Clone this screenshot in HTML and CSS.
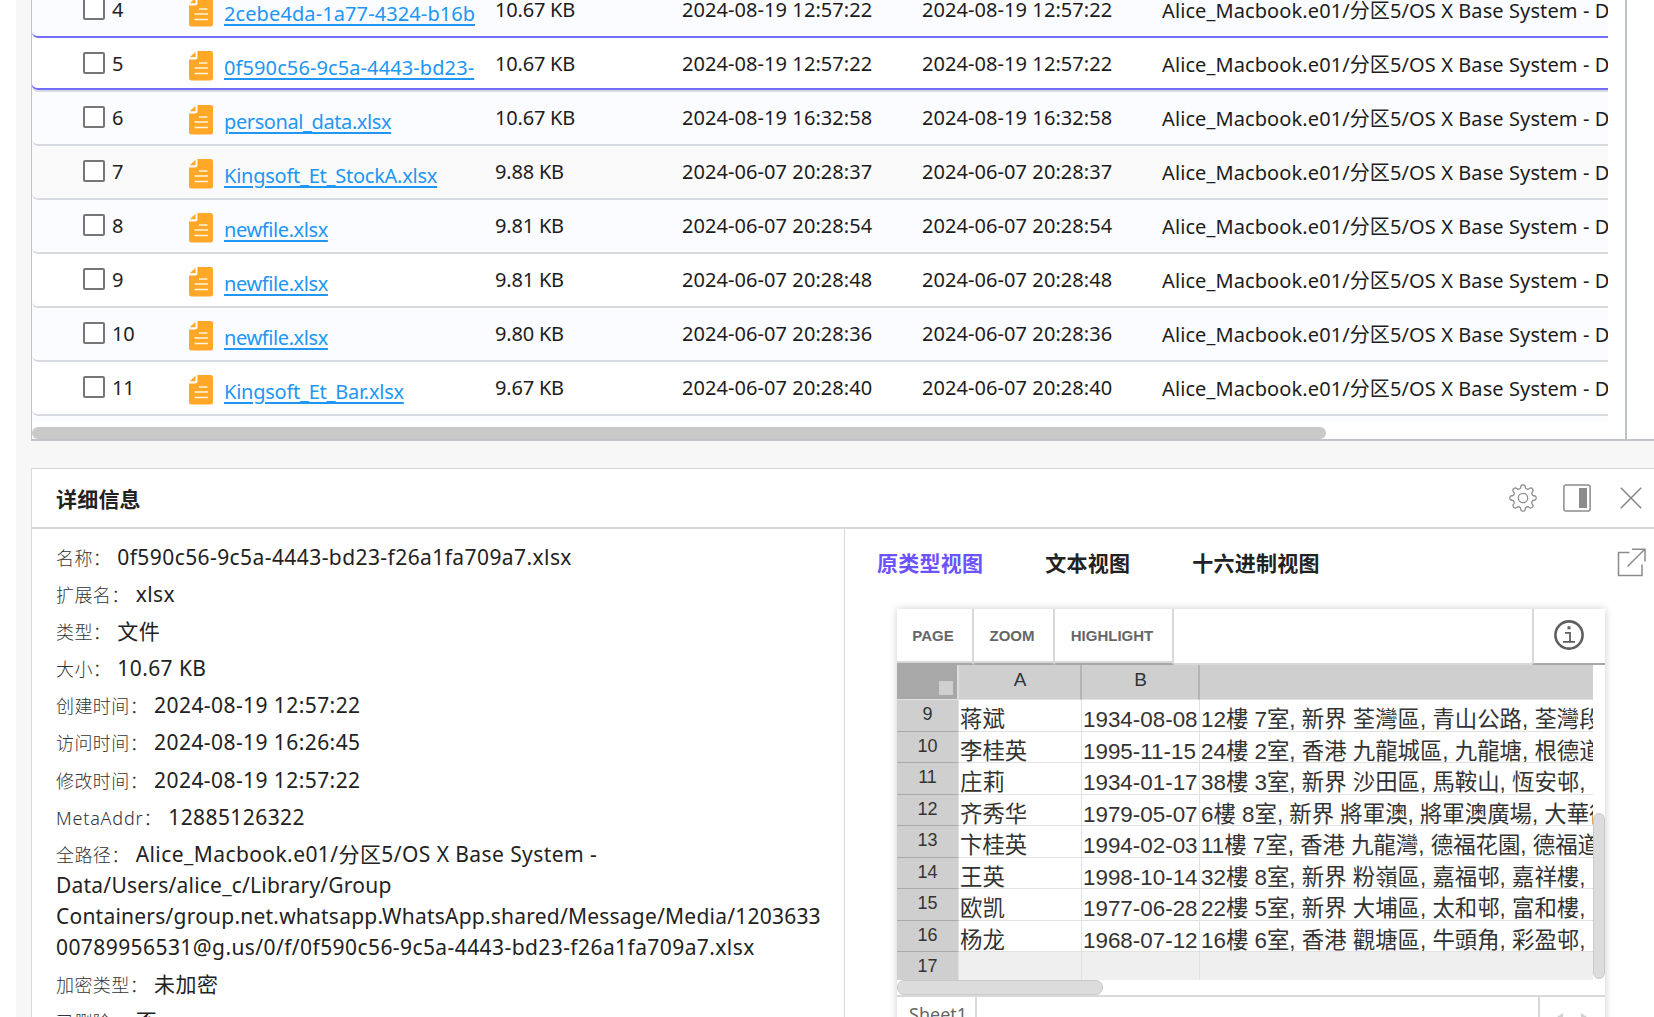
FILE: index.html
```html
<!DOCTYPE html>
<html lang="zh-CN">
<head>
    <meta charset="UTF-8">
    <meta name="viewport" content="width=device-width, initial-scale=1.0">
    <title>详细信息</title>
    <link rel="stylesheet" href="styles.css">
</head>
<body>

    <!-- Shared icons -->
    <svg class="icon-defs" width="0" height="0">
        <symbol id="file-icon" viewBox="0 0 24 30">
            <path fill="#ffa726" d="M9.5 0H21.5Q24 0 24 2.500V27Q24 29.500 21.500 29.500H2.500Q0 29.500 0 27V8.500H6Q8.500 8.500 8.500 6V0Z"/>
            <path fill="#ffa726" d="M6.500 .8V6.300H.8Z"/>
            <path stroke="#fff3dd" stroke-width="1.500" d="M10 12h8.500M5.500 17h13.500M5.500 22.500h13.500"/>
        </symbol>
    </svg>

    <main class="page">

        <!-- File list -->
        <section class="file-list">
            <div class="rows">
                <div class="row row-tint row-before">
                    <input type="checkbox"><span class="num">4</span>
                    <svg class="file-icon"><use href="#file-icon"/></svg>
                    <a href="#" class="name name-hash">2cebe4da-1a77-4324-b16b</a>
                    <span class="cell size">10.67 KB</span>
                    <span class="cell date">2024-08-19 12:57:22</span>
                    <span class="cell date">2024-08-19 12:57:22</span>
                    <span class="cell path">Alice_Macbook.e01/分区5/OS X Base System - D</span>
                </div>
                <div class="row row-selected">
                    <input type="checkbox"><span class="num">5</span>
                    <svg class="file-icon"><use href="#file-icon"/></svg>
                    <a href="#" class="name name-hash">0f590c56-9c5a-4443-bd23-</a>
                    <span class="cell size">10.67 KB</span>
                    <span class="cell date">2024-08-19 12:57:22</span>
                    <span class="cell date">2024-08-19 12:57:22</span>
                    <span class="cell path">Alice_Macbook.e01/分区5/OS X Base System - D</span>
                </div>
                <div class="row row-tint">
                    <input type="checkbox"><span class="num">6</span>
                    <svg class="file-icon"><use href="#file-icon"/></svg>
                    <a href="#" class="name name-short">personal_data.xlsx</a>
                    <span class="cell size">10.67 KB</span>
                    <span class="cell date">2024-08-19 16:32:58</span>
                    <span class="cell date">2024-08-19 16:32:58</span>
                    <span class="cell path">Alice_Macbook.e01/分区5/OS X Base System - D</span>
                </div>
                <div class="row row-hover">
                    <input type="checkbox"><span class="num">7</span>
                    <svg class="file-icon"><use href="#file-icon"/></svg>
                    <a href="#" class="name">Kingsoft_Et_StockA.xlsx</a>
                    <span class="cell size">9.88 KB</span>
                    <span class="cell date">2024-06-07 20:28:37</span>
                    <span class="cell date">2024-06-07 20:28:37</span>
                    <span class="cell path">Alice_Macbook.e01/分区5/OS X Base System - D</span>
                </div>
                <div class="row row-tint">
                    <input type="checkbox"><span class="num">8</span>
                    <svg class="file-icon"><use href="#file-icon"/></svg>
                    <a href="#" class="name name-short">newfile.xlsx</a>
                    <span class="cell size">9.81 KB</span>
                    <span class="cell date">2024-06-07 20:28:54</span>
                    <span class="cell date">2024-06-07 20:28:54</span>
                    <span class="cell path">Alice_Macbook.e01/分区5/OS X Base System - D</span>
                </div>
                <div class="row">
                    <input type="checkbox"><span class="num">9</span>
                    <svg class="file-icon"><use href="#file-icon"/></svg>
                    <a href="#" class="name name-short">newfile.xlsx</a>
                    <span class="cell size">9.81 KB</span>
                    <span class="cell date">2024-06-07 20:28:48</span>
                    <span class="cell date">2024-06-07 20:28:48</span>
                    <span class="cell path">Alice_Macbook.e01/分区5/OS X Base System - D</span>
                </div>
                <div class="row row-tint">
                    <input type="checkbox"><span class="num">10</span>
                    <svg class="file-icon"><use href="#file-icon"/></svg>
                    <a href="#" class="name name-short">newfile.xlsx</a>
                    <span class="cell size">9.80 KB</span>
                    <span class="cell date">2024-06-07 20:28:36</span>
                    <span class="cell date">2024-06-07 20:28:36</span>
                    <span class="cell path">Alice_Macbook.e01/分区5/OS X Base System - D</span>
                </div>
                <div class="row">
                    <input type="checkbox"><span class="num">11</span>
                    <svg class="file-icon"><use href="#file-icon"/></svg>
                    <a href="#" class="name">Kingsoft_Et_Bar.xlsx</a>
                    <span class="cell size">9.67 KB</span>
                    <span class="cell date">2024-06-07 20:28:40</span>
                    <span class="cell date">2024-06-07 20:28:40</span>
                    <span class="cell path">Alice_Macbook.e01/分区5/OS X Base System - D</span>
                </div>
                <div class="row-peek"></div>
            </div>
            <div class="list-scrollbar"></div>
        </section>

        <!-- Detail panel -->
        <section class="detail">
            <header class="detail-header">
                <h2>详细信息</h2>
                <div class="detail-actions">
                    <svg width="28" height="28" viewBox="-14 -14 28 28" fill="none" stroke="#8c8c8c" stroke-width="1.3" stroke-linejoin="round">
                        <path d="M-2.500-9.900L-2-12.200Q-1.500-13.200 0-13.200T2-12.200L2.500-9.900Q3.900-8.500 5.230-8.770L7.200-10Q8.500-10.500 9.330-9.330T10-7.200L8.770-5.230Q8.700-3.400 9.900-2.500L12.200-2Q13.200-1.500 13.200 0T12.200 2L9.900 2.500Q8.500 3.900 8.770 5.230L10 7.200Q10.500 8.500 9.330 9.330T7.200 10L5.230 8.770Q3.400 8.700 2.500 9.900L2 12.200Q1.500 13.200 0 13.200T-2 12.200L-2.500 9.900Q-3.900 8.500-5.230 8.770L-7.200 10Q-8.500 10.500-9.330 9.330T-10 7.200L-8.770 5.230Q-8.700 3.400-9.900 2.500L-12.200 2Q-13.200 1.500-13.200 0T-12.200-2L-9.900-2.500Q-8.500-3.900-8.770-5.230L-10-7.200Q-10.500-8.500-9.330-9.330T-7.200-10L-5.230-8.770Q-3.400-8.700-2.500-9.900Z"/>
                        <circle r="4.700"/>
                    </svg>
                    <svg width="28" height="28" viewBox="0 0 28 28">
                        <rect x=".9" y=".9" width="26.200" height="26.200" rx="2" fill="none" stroke="#8c8c8c" stroke-width="1.500"/>
                        <rect x="16" y="4" width="8" height="20" fill="#8c8c8c"/>
                    </svg>
                    <svg width="22" height="22" viewBox="0 0 22 22" stroke="#858585" stroke-width="1.500">
                        <path d="M.8.8l20.400 20.400M21.200.8L.8 21.200"/>
                    </svg>
                </div>
            </header>

            <div class="detail-body">
                <div class="info">
                    <p><label>名称：</label>0f590c56-9c5a-4443-bd23-f26a1fa709a7.xlsx</p>
                    <p><label>扩展名：</label>xlsx</p>
                    <p><label>类型：</label>文件</p>
                    <p><label>大小：</label>10.67 KB</p>
                    <p><label>创建时间：</label>2024-08-19 12:57:22</p>
                    <p><label>访问时间：</label>2024-08-19 16:26:45</p>
                    <p><label>修改时间：</label>2024-08-19 12:57:22</p>
                    <p><label class="wide">MetaAddr：</label>12885126322</p>
                    <p><label>全路径：</label>Alice_Macbook.e01/分区5/OS X Base System -<br><span class="tight">Data/Users/alice_c/Library/Group<br>Containers/group.net.whatsapp.WhatsApp.shared/Message/Media/1203633</span><br>00789956531@g.us/0/f/0f590c56-9c5a-4443-bd23-f26a1fa709a7.xlsx</p>
                    <p><label>加密类型：</label>未加密</p>
                    <p><label>已删除：</label>否</p>
                </div>

                <div class="preview">
                    <nav class="tabs">
                        <a class="tab active">原类型视图</a>
                        <a class="tab">文本视图</a>
                        <a class="tab">十六进制视图</a>
                        <svg class="open-icon" width="29" height="29" viewBox="0 0 29 29" fill="none" stroke="#8c8c8c" stroke-width="1.500">
                            <path d="M12.500 4.500H1.500V27.500H25V16.500M15 1.200H28V13.500M27.500 1.500L10.500 18.500"/>
                        </svg>
                    </nav>

                    <div class="viewer">
                        <div class="toolbar">
                            <button class="tool page-btn">PAGE</button>
                            <button class="tool zoom-btn">ZOOM</button>
                            <button class="tool highlight-btn">HIGHLIGHT</button>
                            <div class="toolbar-space"></div>
                            <button class="info-btn">
                                <svg width="30" height="30" viewBox="0 0 30 30" fill="none" stroke="#5f5f5f">
                                    <circle cx="15" cy="15" r="13.600" stroke-width="2.600"/>
                                    <path stroke-width="1.800" d="M11 12.800h5v9M9 21.900h12"/>
                                    <path stroke-width="3" d="M13.500 7.800h3"/>
                                </svg>
                            </button>
                        </div>

                        <div class="sheet-area">
                            <div class="sheet">
                                <div class="sheet-row sheet-head">
                                    <span class="corner"><i></i></span><span>A</span><span>B</span><span></span>
                                </div>
                                <div class="sheet-row"><b>9</b><span>蒋斌</span><span>1934-08-08</span><span>12樓 7室, 新界 荃灣區, 青山公路, 荃灣段</span></div>
                                <div class="sheet-row"><b>10</b><span>李桂英</span><span>1995-11-15</span><span>24樓 2室, 香港 九龍城區, 九龍塘, 根德道</span></div>
                                <div class="sheet-row"><b>11</b><span>庄莉</span><span>1934-01-17</span><span>38樓 3室, 新界 沙田區, 馬鞍山, 恆安邨,</span></div>
                                <div class="sheet-row"><b>12</b><span>齐秀华</span><span>1979-05-07</span><span>6樓 8室, 新界 將軍澳, 將軍澳廣場, 大華街</span></div>
                                <div class="sheet-row"><b>13</b><span>卞桂英</span><span>1994-02-03</span><span>11樓 7室, 香港 九龍灣, 德福花園, 德福道</span></div>
                                <div class="sheet-row"><b>14</b><span>王英</span><span>1998-10-14</span><span>32樓 8室, 新界 粉嶺區, 嘉福邨, 嘉祥樓,</span></div>
                                <div class="sheet-row"><b>15</b><span>欧凯</span><span>1977-06-28</span><span>22樓 5室, 新界 大埔區, 太和邨, 富和樓,</span></div>
                                <div class="sheet-row"><b>16</b><span>杨龙</span><span>1968-07-12</span><span>16樓 6室, 香港 觀塘區, 牛頭角, 彩盈邨,</span></div>
                                <div class="sheet-row sheet-empty"><b>17</b><span></span><span></span><span></span></div>
                            </div>
                            <div class="v-scroll"></div>
                        </div>
                        <div class="h-scroll"></div>

                        <div class="sheet-tabs">
                            <span class="sheet-tab">Sheet1</span>
                            <span class="sheet-nav">
                                <svg width="36" height="12" viewBox="0 0 36 12" fill="#d0d0d0">
                                    <path d="M9 0v12L0 6zM27 0v12l9-6z"/>
                                </svg>
                            </span>
                        </div>
                    </div>
                </div>
            </div>
        </section>
    </main>

</body>
</html>
```
FILE: styles.css
```css
/* General Styles */
* {
    box-sizing: border-box;
}

body {
    margin: 0;
    height: 1017px;
    overflow: hidden;
    background-color: #fff;
    color: #222;
    font-family: "Noto Sans", "Noto Sans CJK SC", sans-serif;
    font-size: 20px;
}

.icon-defs {
    display: none;
}

.page {
    height: 1017px;
    margin-left: 16px;
    padding-left: 15px;
    background-color: #f7f7f7;
    overflow: hidden;
}

/* File list */
.file-list {
    height: 441px;
    border-left: 1px solid #c0c4c9;
    border-bottom: 2px solid #c0c4c9;
    background: linear-gradient(#c0c4c9, #c0c4c9) 1593px 0 / 2px 100% no-repeat #fff;
    overflow: hidden;
}

.rows {
    width: 1576px;
    margin-top: -16px;
    height: 443px;
    overflow: hidden;
}

.row {
    display: flex;
    align-items: center;
    height: 54px;
    padding: 0 0 8px 51px;
    border-bottom: 2px solid #d7dadf;
    border-bottom-left-radius: 6px;
    background-color: #fff;
    white-space: nowrap;
}

.row-tint {
    background-color: #fbfcff;
}

.row-hover {
    background-color: #fafafa;
}

.row-before {
    border-bottom-color: #706dff;
}

.row-selected {
    box-shadow: inset 0 -2px #706dff;
}

.row-peek {
    height: 5px;
    background-color: #fbfcff;
}

.row input {
    appearance: none;
    flex: none;
    width: 22px;
    height: 22px;
    margin: 6px 7px 0 0;
    border: 2px solid #767676;
    border-radius: 2px;
    background-color: #fff;
}

.num {
    width: 77px;
    margin-top: 6px;
    letter-spacing: -0.3px;
}

.file-icon {
    flex: none;
    width: 24px;
    height: 30px;
    margin: 12px 11px 0 0;
}

.name {
    width: 251px;
    margin: 15px 20px 0 0;
    overflow: hidden;
    color: #2196f3;
    letter-spacing: -0.24px;
    text-decoration: underline;
    text-decoration-thickness: 2px;
    text-underline-offset: 3px;
}

.name-hash {
    letter-spacing: 0.1px;
}

.name-short {
    letter-spacing: -0.4px;
}

.cell {
    flex: none;
    margin-top: 6px;
    color: #1c1c1c;
}

.size {
    width: 187px;
    letter-spacing: -0.2px;
}

.date {
    width: 240px;
    letter-spacing: 0.07px;
}

.path {
    width: 446px;
    overflow: hidden;
    letter-spacing: 0.1px;
}

.list-scrollbar {
    width: 1294px;
    height: 12px;
    border-radius: 6px;
    background-color: #c9c9c9;
}

/* Detail panel */
.detail {
    margin-top: 27px;
    height: 560px;
    border-top: 1px solid #d8d8d8;
    border-left: 1px solid #d8d8d8;
    background-color: #fff;
}

.detail-header {
    display: flex;
    justify-content: space-between;
    align-items: center;
    height: 60px;
    padding: 0 12px 0 24px;
    border-bottom: 2px solid #d8d8d8;
}

.detail-header h2 {
    margin: 2px 0 0;
    font-size: 21px;
    letter-spacing: 0.2px;
    line-height: 30px;
}

.detail-actions {
    display: flex;
    align-items: center;
    gap: 26px;
}

.detail-actions svg:last-child {
    margin-left: 3px;
}

.detail-body {
    display: flex;
    height: 500px;
}

/* File information */
.info {
    width: 813px;
    padding: 13px 0 0 24px;
    border-right: 1px solid #d8d8d8;
    font-size: 21px;
    letter-spacing: 0.42px;
    line-height: 31px;
    white-space: nowrap;
}

.info p {
    margin: 0 0 6.1px;
}

.info label {
    margin-right: 6px;
    color: #333;
    font-size: 18px;
    font-weight: 300;
    line-height: 20px;
}

.info .wide {
    letter-spacing: 0.8px;
}

.info .tight {
    letter-spacing: 0.22px;
}

/* Preview */
.preview {
    flex: 1;
    padding-left: 32px;
}

.tabs {
    display: flex;
    gap: 62px;
    height: 80px;
    padding-top: 19px;
}

.tab {
    font-size: 21px;
    font-weight: bold;
    letter-spacing: 0.25px;
    line-height: 30px;
}

.tab.active {
    color: #6c53ff;
}

.open-icon {
    margin: 0 8px 0 auto;
}

/* Document viewer */
.viewer {
    width: 708px;
    height: 420px;
    margin-left: 20px;
    background-color: #fff;
    box-shadow: 0 0 8px rgba(0, 0, 0, 0.2);
}

.toolbar {
    display: flex;
    height: 56px;
}

.tool, .info-btn {
    padding: 0;
    border: none;
    border-right: 2px solid #d9d9d9;
    border-bottom: 2px solid #a8a8a8;
    background-color: #fff;
    color: #666;
    font: bold 15px "Liberation Sans", Arial, sans-serif;
    box-shadow: inset 0 -2px #d9d9d9;
}

.tool {
    padding: 0 3px 2px 0;
}

.page-btn {
    width: 77px;
}

.zoom-btn {
    width: 81px;
}

.highlight-btn {
    width: 119px;
}

.toolbar-space {
    flex: 1;
    border-bottom: 2px solid #d9d9d9;
}

.info-btn {
    display: flex;
    justify-content: center;
    width: 73px;
    padding: 11px 2px 0 0;
    border-right: none;
    border-left: 2px solid #d9d9d9;
    box-shadow: none;
}

/* Spreadsheet */
.sheet-area {
    display: flex;
    height: 315px;
}

.sheet {
    width: 696px;
    overflow: hidden;
    font-family: "Liberation Sans", "Noto Sans CJK TC", sans-serif;
}

.sheet-row {
    display: grid;
    grid-template-columns: 62px 123px 118px 393px;
    height: 31.5px;
    color: #333;
    font-size: 22.4px;
    line-height: 40px;
    white-space: nowrap;
}

.sheet-row > * {
    padding-left: 1px;
    overflow: hidden;
    border-right: 1px solid #e2e2e2;
    border-bottom: 1px solid #e2e2e2;
}

.sheet-row b {
    padding: 0;
    border-bottom-color: #aaa;
    background-color: #cfcfcf;
    color: #333;
    font-size: 18px;
    font-weight: normal;
    line-height: 29px;
    text-align: center;
}

.sheet-row span:nth-child(4) {
    border-right: none;
}

.sheet-empty span {
    background-color: #efefef;
}

.sheet-head {
    height: 35px;
    background-color: #cfcfcf;
    font-size: 19px;
    line-height: 30px;
    text-align: center;
}

.sheet-head > * {
    border-right: 2px solid #b4b4b4;
}

.sheet-head .corner {
    display: flex;
    justify-content: flex-end;
    align-items: flex-end;
    padding: 0 4px 4px 0;
    border-right-color: #ddd;
    background-color: #a8a8a8;
}

.corner i {
    width: 14px;
    height: 14px;
    background-color: #cfcfcf;
}

.v-scroll {
    width: 12px;
    height: 166px;
    margin-top: 148px;
    border: 1px solid #cacaca;
    border-radius: 6px;
    background-color: #dcdcdc;
}

.h-scroll {
    width: 206px;
    height: 15px;
    border: 1px solid #cacaca;
    border-radius: 7px;
    background-color: #dcdcdc;
}

.sheet-tabs {
    display: flex;
    justify-content: space-between;
    height: 34px;
    border-top: 2px solid #d9d9d9;
}

.sheet-tab {
    width: 80px;
    padding: 5px 0 0 12px;
    border-right: 2px solid #d9d9d9;
    color: #666;
    font-size: 18px;
}

.sheet-nav {
    width: 67px;
    padding: 16px 0 0 14px;
    border-left: 2px solid #d9d9d9;
    line-height: 0;
}
```
